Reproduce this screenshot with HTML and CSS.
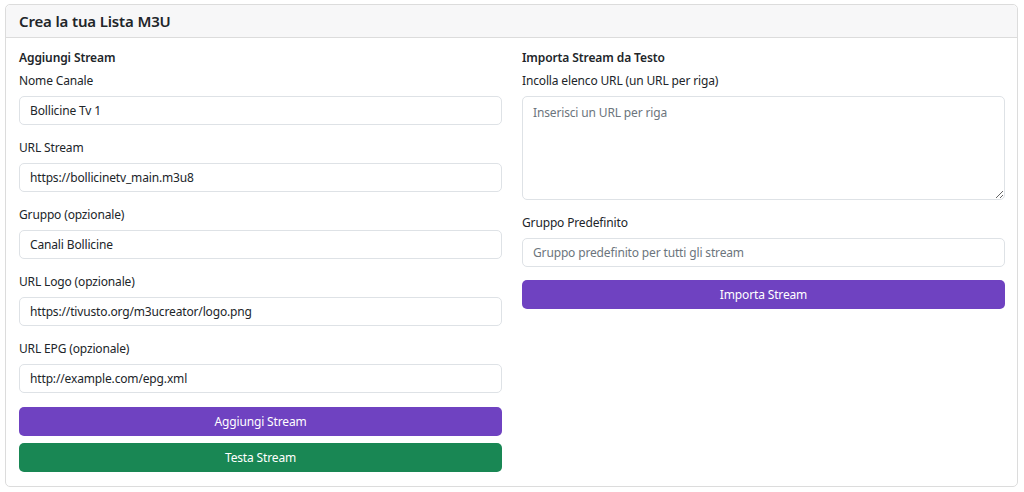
FILE: index.html
```html
<!DOCTYPE html>
<html lang="it">
<head>
<meta charset="utf-8">
<title>Crea la tua Lista M3U</title>
<link rel="stylesheet" href="styles.css">
</head>
<body>
<div class="card">
  <div class="card-header">Crea la tua Lista M3U</div>
  <div class="card-body">
    <div class="col col-add">
      <h6 class="section-title">Aggiungi Stream</h6>
      <div class="group">
        <label class="label">Nome Canale</label>
        <input class="control" type="text" value="Bollicine Tv 1">
      </div>
      <div class="group">
        <label class="label">URL Stream</label>
        <input class="control" type="text" value="https://bollicinetv_main.m3u8">
      </div>
      <div class="group">
        <label class="label">Gruppo (opzionale)</label>
        <input class="control" type="text" value="Canali Bollicine">
      </div>
      <div class="group">
        <label class="label">URL Logo (opzionale)</label>
        <input class="control" type="text" value="https://tivusto.org/m3ucreator/logo.png">
      </div>
      <div class="group">
        <label class="label">URL EPG (opzionale)</label>
        <input class="control" type="text" value="http://example.com/epg.xml">
      </div>
      <button class="btn btn-purple">Aggiungi Stream</button>
      <button class="btn btn-green">Testa Stream</button>
    </div>
    <div class="col">
      <h6 class="section-title">Importa Stream da Testo</h6>
      <div class="group">
        <label class="label">Incolla elenco URL (un URL per riga)</label>
        <textarea class="control area" placeholder="Inserisci un URL per riga"></textarea>
      </div>
      <div class="group">
        <label class="label">Gruppo Predefinito</label>
        <input class="control" type="text" placeholder="Gruppo predefinito per tutti gli stream">
      </div>
      <button class="btn btn-purple">Importa Stream</button>
    </div>
  </div>
</div>
</body>
</html>
```
FILE: styles.css
```css
* { box-sizing: border-box; }
html, body { margin: 0; background: #ffffff; }
body {
  padding: 4px 6px 0 5px;
  font-family: "Noto Sans", "Open Sans", sans-serif;
  font-size: 13px;
  color: #212529;
}
.card {
  border: 1px solid #dcdcdc;
  border-radius: 5px;
  background: #fff;
  height: 483px;
  display: flex;
  flex-direction: column;
}
.card-header {
  height: 33px;
  background: #f7f7f8;
  border-bottom: 1px solid #dcdcdc;
  border-radius: 5px 5px 0 0;
  padding: 0 13px;
  font-size: 15px;
  font-weight: 600;
  line-height: 32px;
  letter-spacing: -0.15px;
  color: #212529;
}
.card-body {
  display: grid;
  grid-template-columns: 483px 483px;
  column-gap: 20px;
  padding: 10px 13px 13px;
  align-items: start;
}
.col { display: flex; flex-direction: column; }
.section-title {
  margin: 0 0 4px;
  font-size: 12px;
  font-weight: 600;
  line-height: 19px;
  letter-spacing: -0.1px;
}
.group { display: flex; flex-direction: column; margin-bottom: 13px; }
.label { line-height: 19px; margin-bottom: 6px; }
.label, .control, .btn { font-size: 12px; letter-spacing: -0.15px; }
.control {
  height: 29px;
  border: 1px solid #dee2e6;
  border-radius: 5px;
  padding: 0 10px;
  font-family: inherit;
  color: #212529;
  background: #fff;
  outline: none;
}
.control::placeholder { color: #6c757d; }
.area {
  height: 104px;
  padding: 6px 10px;
  resize: vertical;
  line-height: 19px;
}
.btn {
  height: 29px;
  border: 0;
  border-radius: 5px;
  color: #fff;
  font-family: inherit;
  cursor: pointer;
}
.btn-purple { background: #6f42c1; }
.col-add .btn-purple { margin-top: 1px; }
.btn-green { background: #198754; margin-top: 7px; }
```
